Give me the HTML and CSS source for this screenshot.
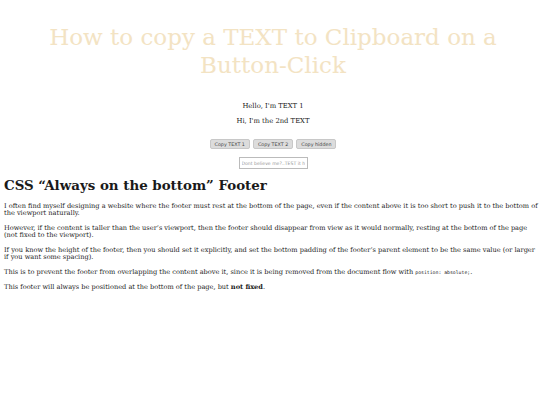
FILE: index.html
```html
<!DOCTYPE html>
<html>
<head>
<meta charset="utf-8">
<link rel="stylesheet" href="styles.css">
</head>
<body>
<div class="wrap">
  <h1 class="title">How to copy a TEXT to Clipboard on a Button-Click</h1>
  <div class="center">
    <p class="line">Hello, I'm TEXT 1</p>
    <p class="line">Hi, I'm the 2nd TEXT</p>
    <div class="buttons">
      <button class="btn">Copy TEXT 1</button>
      <button class="btn">Copy TEXT 2</button>
      <button class="btn">Copy hidden</button>
    </div>
    <input class="field" type="text" value="Dont believe me?..TEST it here!">
  </div>
  <h2 class="heading">CSS “Always on the bottom” Footer</h2>
  <p class="text">I often find myself designing a website where the footer must rest at the bottom of the page, even if the content above it is too short to push it to the bottom of the viewport naturally.</p>
  <p class="text">However, if the content is taller than the user’s viewport, then the footer should disappear from view as it would normally, resting at the bottom of the page (not fixed to the viewport).</p>
  <p class="text">If you know the height of the footer, then you should set it explicitly, and set the bottom padding of the footer’s parent element to be the same value (or larger if you want some spacing).</p>
  <p class="text">This is to prevent the footer from overlapping the content above it, since it is being removed from the document flow with <code class="code">position: absolute;</code>.</p>
  <p class="text">This footer will always be positioned at the bottom of the page, but <strong>not fixed</strong>.</p>
</div>
</body>
</html>
```

FILE: styles.css
```css
html, body {
  margin: 0;
  padding: 0;
  background: #ffffff;
}
body {
  font-family: "DejaVu Serif", serif;
  color: #1a1a1a;
  overflow: hidden;
}
.wrap {
  padding: 0 0 0 4px;
  width: 536px;
}
.center,
.title {
  width: 538px;
}
.title {
  margin: 23px 0 0 0;
  font-weight: normal;
  font-size: 23px;
  line-height: 28px;
  color: #f3e3c3;
  text-align: center;
}
.center {
  text-align: center;
  margin-top: 23px;
}
.line {
  font-size: 6.8px;
  line-height: 9px;
  margin: 0 0 6px 0;
}
.buttons {
  margin-top: 13px;
  display: flex;
  justify-content: center;
  gap: 3px;
}
.btn {
  font-family: "DejaVu Sans", sans-serif;
  font-size: 4.8px;
  height: 10px;
  padding: 0 4px;
  background: #dcdcdc;
  border: 1px solid #c8c8c8;
  border-radius: 2px;
  color: #444;
}
.field {
  display: block;
  margin: 8px auto 0 auto;
  width: 63px;
  height: 10px;
  padding: 0 2px;
  box-sizing: content-box;
  font-family: "DejaVu Sans", sans-serif;
  font-size: 4.6px;
  color: #999;
  border: 1px solid #bbb;
}
.heading {
  margin: 7.5px 0 10px 0;
  font-size: 13.4px;
  line-height: 16px;
  font-weight: bold;
}
.text {
  font-size: 6.6px;
  line-height: 7.4px;
  margin: 0 0 7.3px 0;
  width: 535px;
}
.code {
  font-family: "DejaVu Sans Mono", monospace;
  font-size: 4.8px;
}
```
